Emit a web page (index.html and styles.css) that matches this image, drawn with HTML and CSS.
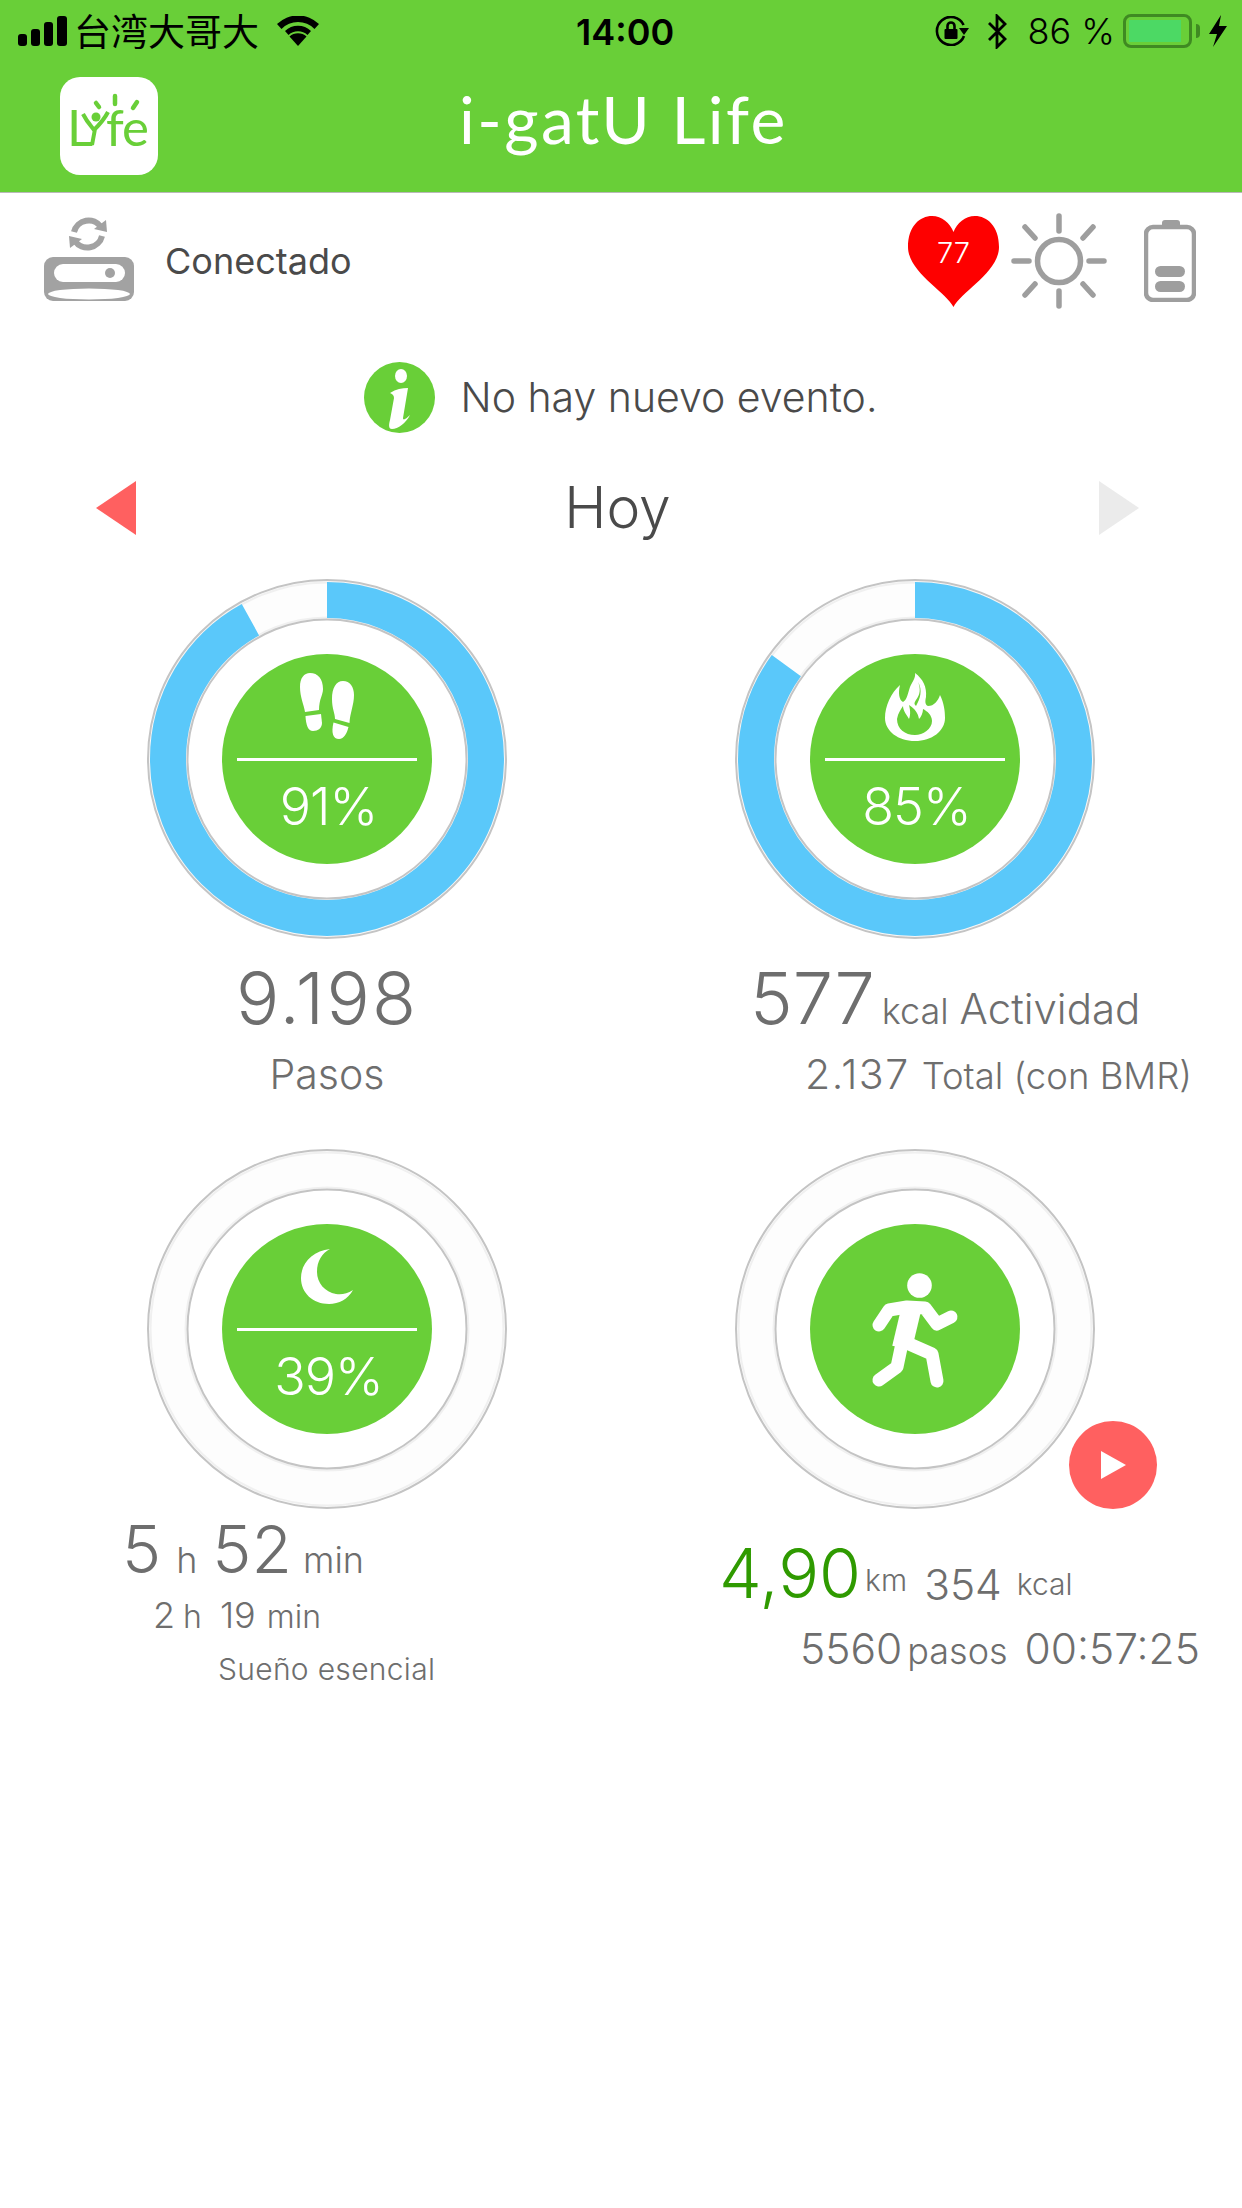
FILE: index.html
```html
<!DOCTYPE html>
<html lang="es">
<head>
<meta charset="utf-8">
<title>i-gotU Life</title>
<link rel="stylesheet" href="styles.css">
</head>
<body>
<header class="header">
  <div class="statusbar">
    <div class="sb-left">
      <svg class="sb-signal" viewBox="0 0 49 30"><rect x="0" y="18" width="9" height="12" rx="3"/><rect x="13" y="13" width="9" height="17" rx="3"/><rect x="26" y="6" width="9" height="24" rx="3"/><rect x="39" y="0" width="10" height="30" rx="3"/></svg>
      <span class="sb-carrier">台湾大哥大</span>
      <svg class="sb-wifi" viewBox="0 0 42 30"><path d="M21 30 L12.5 20.5 A13 13 0 0 1 29.5 20.5 Z"/><path d="M8 15 A19 19 0 0 1 34 15 L30.5 19 A14 14 0 0 0 11.5 19 Z"/><path d="M0 8 A30 30 0 0 1 42 8 L37.5 13 A23 23 0 0 0 4.500 13 Z"/></svg>
    </div>
    <span class="sb-time">14:00</span>
    <div class="sb-right">
      <svg class="sb-lock" viewBox="0 0 34 30"><path class="sb-lock-arc" d="M29 20 A14 14 0 1 1 28.600 9"/><path d="M24 12 H34 L29 19 Z"/><rect x="9.500" y="13" width="13" height="10" rx="1"/><path class="sb-lock-bow" d="M12.500 13 V10 A3.500 3.500 0 0 1 19.500 10 V13"/></svg>
      <svg class="sb-bt" viewBox="0 0 21 35"><path d="M2 9 L18 25 L10 33 V2 L18 10 L2 26"/></svg>
      <span class="sb-pct">86 %</span>
      <div class="sb-batt"><div class="sb-batt-fill"></div></div>
      <div class="sb-batt-nub"></div>
      <svg class="sb-bolt" viewBox="0 0 18 32"><path d="M12 0 L0 19 H8 L4 32 L18 11 H10 Z"/></svg>
    </div>
  </div>
  <div class="navbar">
    <div class="logo">
      <svg viewBox="0 0 98 98">
        <text class="logo-text" x="7" y="69">L</text>
        <text class="logo-text logo-fe" x="46" y="69">fe</text>
        <path class="logo-y" d="M23 37 C27 45 31 49 34 53 C38 49 44 43 48 35 M35 52 L32 68"/>
        <circle class="logo-dot" cx="36" cy="40" r="4.500"/>
        <path class="logo-ray" d="M55 19 V27 M36 26 L39 30 M77 25 L73 31"/>
      </svg>
    </div>
    <h1 class="title">i-gatU Life</h1>
  </div>
</header>

<main>
  <section class="device-row">
    <div class="device-left">
      <svg class="device-icon" viewBox="0 0 90 86">
        <path class="dev-arc" d="M30 16 A15 15 0 0 1 57 11"/>
        <path class="dev-fill" d="M50 13 L63 16 L62 4 Z"/>
        <path class="dev-arc" d="M58 20 A15 15 0 0 1 31 25"/>
        <path class="dev-fill" d="M38 23 L25 20 L26 32 Z"/>
        <rect class="dev-fill" x="0" y="41" width="90" height="44" rx="9"/>
        <rect class="dev-hole" x="10" y="48" width="71" height="18" rx="9"/>
        <circle class="dev-fill" cx="66" cy="57" r="5"/>
        <ellipse class="dev-hole" cx="45" cy="78" rx="41" ry="5.500"/>
      </svg>
      <span class="device-status">Conectado</span>
    </div>
    <div class="device-right">
      <div class="heart">
        <svg class="heart-shape" viewBox="0 0 91 91"><path d="M45.500 91 C38 76 0 56 0 31 C0 10 12 0 24 0 C34 0 42 7 45.500 16 C49 7 57 0 67 0 C79 0 91 10 91 31 C91 56 53 76 45.500 91 Z"/></svg>
        <span class="heart-value">77</span>
      </div>
      <svg class="sun" viewBox="0 0 96 96">
        <circle cx="48" cy="48" r="21.500"/>
        <path d="M48 3 V18 M48 78 V93 M3 48 H18 M78 48 H93 M14 14 L24 25 M82 14 L72 25 M14 82 L24 71 M82 82 L72 71"/>
      </svg>
      <svg class="batt" viewBox="0 0 52 82">
        <rect class="batt-cap" x="18" y="0" width="18" height="8" rx="3"/>
        <rect class="batt-body" x="2" y="7" width="48" height="73" rx="7"/>
        <rect class="batt-cap" x="11" y="46" width="30" height="11" rx="5.500"/>
        <rect class="batt-cap" x="11" y="61" width="30" height="11" rx="5.500"/>
      </svg>
    </div>
  </section>

  <section class="event-row">
    <svg class="info-icon" viewBox="0 0 71 71">
      <circle class="info-bg" cx="35.500" cy="35.500" r="35.500"/>
      <ellipse class="info-fg" cx="37" cy="14" rx="6" ry="7"/>
      <path class="info-fg" d="M26 31 C32 27 38 26 44 26 L39 56 C39 59 42 57 46 53 C42 61 34 67 28 67 C24 67 25 62 26 58 L30 36 C30 33 28 32 26 31 Z"/>
    </svg>
    <span class="event-text">No hay nuevo evento.</span>
  </section>

  <nav class="date-row">
    <svg class="arrow" viewBox="0 0 40 54"><path class="arrow-prev" d="M40 0 V54 L0 27 Z"/></svg>
    <span class="date-label">Hoy</span>
    <svg class="arrow" viewBox="0 0 40 54"><path class="arrow-next" d="M0 0 V54 L40 27 Z"/></svg>
  </nav>

  <section class="grid">
    <article class="cell">
      <div class="ring">
        <svg class="ring-svg" viewBox="0 0 360 360">
          <circle class="ring-band" cx="180" cy="180" r="159"/>
          <circle class="ring-shade" cx="180" cy="180" r="176.500"/>
          <circle class="ring-shade" cx="180" cy="180" r="141.500"/>
          <circle class="ring-value" cx="180" cy="180" r="159" pathLength="100" stroke-dasharray="92 100"/>
          <circle class="ring-line" cx="180" cy="180" r="179"/>
          <circle class="ring-line" cx="180" cy="180" r="139.500"/>
        </svg>
        <div class="badge">
          <div class="badge-top">
            <svg class="icon-feet" viewBox="0 0 54 67">
              <path d="M10 0 C18 0 23 6 23 16 C23 22 19 26 19 37 L5 39 C4 32 0 24 0 14 C0 5 4 0 10 0 Z"/>
              <path d="M5.500 43 L21 41 L22 50 C22 55 18 58 13 58 C8 58 6 52 5.500 43 Z"/>
              <path d="M43 8 C50 8 54 14 54 22 C54 32 50 40 49.500 50 L35 46 C35 40 32 36 32 26 C32 15 36 8 43 8 Z"/>
              <path d="M33.500 49.500 L48.500 54 C47 60 44 66 39 66 C33 66 31 60 33.500 49.500 Z"/>
            </svg>
          </div>
          <div class="badge-line"></div>
          <div class="badge-pct">91%</div>
        </div>
      </div>
      <div class="steps-value">9.198</div>
      <div class="steps-label">Pasos</div>
    </article>

    <article class="cell">
      <div class="ring">
        <svg class="ring-svg" viewBox="0 0 360 360">
          <circle class="ring-band" cx="180" cy="180" r="159"/>
          <circle class="ring-shade" cx="180" cy="180" r="176.500"/>
          <circle class="ring-shade" cx="180" cy="180" r="141.500"/>
          <circle class="ring-value" cx="180" cy="180" r="159" pathLength="100" stroke-dasharray="85 100"/>
          <circle class="ring-line" cx="180" cy="180" r="179"/>
          <circle class="ring-line" cx="180" cy="180" r="139.500"/>
        </svg>
        <div class="badge">
          <div class="badge-top">
            <svg class="icon-fire" viewBox="0 0 60 68">
              <path d="M30 0 C38 6 42 14 41 24 C40 28 40 32 43 33 C49 33 53 28 55 22 C59 30 60 38 60 45 C60 58 47 68 30 68 C13 68 0 58 0 45 C0 33 6 20 15 12 C13 20 14 27 18 29 C22 27 23 20 25 14 C27 9 31 5 30 0 Z"/>
              <path class="fire-cut" d="M12 46 C13 40 16 36 18 33 C18 38 22 42 24 46 C26 41 25 36 24 32 C30 36 33 40 34 46 C36 44 38 40 38 36 C42 38 47 42 47 48 C47 56 38 62 30 62 C20 62 12 56 12 46 Z"/>
              <path class="fire-cut" d="M33 9 C36 16 35 22 31 27 C29 30 29 31 31 33 C35 26 38 17 33 9 Z"/>
            </svg>
          </div>
          <div class="badge-line"></div>
          <div class="badge-pct">85%</div>
        </div>
      </div>
      <div class="kcal-main"><span class="num-xl">577</span><span class="unit-kcal">kcal</span><span class="unit-act">Actividad</span></div>
      <div class="kcal-total"><span class="num-total">2.137</span><span class="unit-total">Total (con BMR)</span></div>
    </article>

    <article class="cell">
      <div class="ring">
        <svg class="ring-svg" viewBox="0 0 360 360">
          <circle class="ring-band" cx="180" cy="180" r="159"/>
          <circle class="ring-shade" cx="180" cy="180" r="176.500"/>
          <circle class="ring-shade" cx="180" cy="180" r="141.500"/>
          <circle class="ring-line" cx="180" cy="180" r="179"/>
          <circle class="ring-line" cx="180" cy="180" r="139.500"/>
        </svg>
        <div class="badge">
          <div class="badge-top">
            <svg class="icon-moon" viewBox="0 0 52 55"><path d="M29 0 C12 2 0 14 0 29 C0 44 12 55 28 55 C38 55 47 50 52 41 C46 45 40 46 35 45 C24 43 16 34 16 23 C16 12 21 4 29 0 Z"/></svg>
          </div>
          <div class="badge-line"></div>
          <div class="badge-pct">39%</div>
        </div>
      </div>
      <div class="sleep-main"><span class="num-lg">5</span><span class="unit-h">h</span><span class="num-lg num-gap">52</span><span class="unit-min">min</span></div>
      <div class="sleep-sub"><span class="num-sm">2</span><span class="unit-h-sm">h</span><span class="num-sm num-gap-sm">19</span><span class="unit-min-sm">min</span></div>
      <div class="sleep-label">Sueño esencial</div>
    </article>

    <article class="cell">
      <div class="ring">
        <svg class="ring-svg" viewBox="0 0 360 360">
          <circle class="ring-band" cx="180" cy="180" r="159"/>
          <circle class="ring-shade" cx="180" cy="180" r="176.500"/>
          <circle class="ring-shade" cx="180" cy="180" r="141.500"/>
          <circle class="ring-line" cx="180" cy="180" r="179"/>
          <circle class="ring-line" cx="180" cy="180" r="139.500"/>
        </svg>
        <div class="badge badge-center">
          <svg class="icon-run" viewBox="145 119 100 140">
            <circle class="run-head" cx="199.500" cy="145.500" r="12.300"/>
            <path d="M159 185 L169 170 L187 167 L205 168 L217 184 L231 177"/>
            <path class="run-torso" d="M191 170 L182 208"/>
            <path d="M181 208 L177 227 L159 240"/>
            <path d="M187 203 L212 214 L217 241"/>
          </svg>
        </div>
        <button class="play"><svg viewBox="0 0 25 28"><path d="M0 0 L25 14 L0 28 Z"/></svg></button>
      </div>
      <div class="run-main"><span class="run-km">4,90</span><span class="run-km-unit">km</span><span class="run-kcal">354</span><span class="run-kcal-unit">kcal</span></div>
      <div class="run-sub"><span class="num-md">5560</span><span class="run-steps-unit">pasos</span><span class="num-md run-time">00:57:25</span></div>
    </article>
  </section>
</main>
</body>
</html>
```
FILE: styles.css
```css
* { box-sizing: border-box; }
html, body { margin: 0; padding: 0; background: #fff; }
body {
  width: 1242px;
  height: 2208px;
  overflow: hidden;
  font-family: Inter, "Liberation Sans", sans-serif;
  color: #6e6e6e;
}

/* header */
.header { height: 193px; background: #69cf38; border-bottom: 1px solid #b9b9b9; }
.statusbar { height: 62px; display: flex; align-items: flex-start; justify-content: space-between; padding: 13px 15px 0 18px; position: relative; color: #000; }
.sb-left, .sb-right { display: flex; align-items: center; height: 36px; }
.sb-signal { width: 49px; height: 30px; fill: #000; }
.sb-carrier { font-family: "Noto Sans CJK TC", sans-serif; font-size: 37px; line-height: 36px; margin-left: 7px; margin-top: -3px; }
.sb-wifi { width: 42px; height: 30px; margin-left: 18px; fill: #000; }
.sb-time { position: absolute; left: 576px; top: 11px; font-size: 36px; line-height: 42px; font-weight: 600; }
.sb-lock { width: 34px; height: 30px; fill: #000; }
.sb-lock-arc, .sb-lock-bow { fill: none; stroke: #000; stroke-width: 2.600; }
.sb-bt { width: 21px; height: 35px; margin-left: 18px; fill: none; stroke: #000; stroke-width: 2.800; }
.sb-pct { font-size: 36px; line-height: 36px; margin-left: 19px; font-weight: 300; }
.sb-batt { width: 69px; height: 34px; margin-left: 8px; border: 3px solid #3f8a22; border-radius: 8px; padding: 3px; }
.sb-batt-fill { width: 52px; height: 22px; background: #4cd964; }
.sb-batt-nub { width: 4px; height: 14px; margin-left: 4px; background: #3f8a22; border-radius: 0 4px 4px 0; }
.sb-bolt { width: 18px; height: 32px; margin-left: 9px; fill: #000; }

.navbar { height: 130px; display: flex; align-items: flex-start; padding: 15px 0 0 60px; position: relative; }
.logo { width: 98px; height: 98px; background: #fff; border-radius: 20px; }
.logo svg { display: block; width: 98px; height: 98px; }
.logo-text { font-family: Lato, sans-serif; font-size: 51px; font-weight: 400; fill: #69cf38; }
.logo-fe { letter-spacing: -1px; font-weight: 400; }
.logo-y { fill: none; stroke: #69cf38; stroke-width: 4; }
.logo-dot { fill: #69cf38; }
.logo-ray { fill: none; stroke: #69cf38; stroke-width: 4.500; stroke-linecap: round; }
.title { position: absolute; left: 459px; top: 17px; margin: 0; font-family: Lato, sans-serif; font-weight: 400; font-size: 66px; line-height: 80px; letter-spacing: 2.400px; color: #fff; white-space: nowrap; }

/* device row */
.device-row { height: 137px; display: flex; justify-content: space-between; align-items: flex-start; padding: 23px 46px 0 44px; }
.device-left { display: flex; align-items: center; }
.device-icon { width: 90px; height: 86px; }
.dev-arc { fill: none; stroke: #a2a2a2; stroke-width: 6; }
.dev-fill { fill: #a2a2a2; }
.dev-hole { fill: #fff; }
.device-status { font-size: 36px; line-height: 44px; margin-left: 31px; margin-top: 3px; color: #4a4a4a; }
.device-right { display: flex; align-items: flex-start; }
.heart { display: grid; width: 91px; height: 91px; place-items: center; }
.heart > * { grid-area: 1 / 1; }
.heart-shape { width: 91px; height: 91px; fill: #fe0000; }
.heart-value { color: #fff; font-size: 29px; font-weight: 300; line-height: 34px; margin-top: -18px; }
.sun { width: 96px; height: 96px; margin-left: 12px; margin-top: -3px; fill: none; stroke: #9e9e9e; stroke-width: 5.500; stroke-linecap: round; }
.batt { width: 52px; height: 82px; margin-left: 37px; margin-top: 4px; }
.batt-cap { fill: #9e9e9e; }
.batt-body { fill: none; stroke: #9e9e9e; stroke-width: 4.500; }

/* info row */
.event-row { height: 134px; display: flex; align-items: center; justify-content: center; padding-right: 1px; }
.info-icon { width: 71px; height: 71px; }
.info-bg { fill: #69cf38; }
.info-fg { fill: #fff; }
.event-text { font-size: 41px; line-height: 48px; margin-left: 26px; color: #4a4a4a; font-weight: 300; }

/* date */
.date-row { height: 88px; display: flex; align-items: center; justify-content: space-between; padding: 0 103px 0 96px; }
.arrow { width: 40px; height: 54px; }
.arrow-prev { fill: #ff6060; }
.arrow-next { fill: #ebebeb; }
.date-label { font-size: 57px; line-height: 70px; color: #4a4a4a; font-weight: 300; }

/* grid */
.grid { display: grid; grid-template-columns: 588px 588px; grid-auto-rows: 570px; padding: 27px 33px 0; }
.cell { min-width: 0; }
.ring { position: relative; width: 360px; height: 360px; margin: 0 auto; display: grid; place-items: center; }
.ring > svg, .ring > .badge { grid-area: 1 / 1; }
.ring-svg { width: 360px; height: 360px; transform: rotate(-90deg); }
.ring-band { fill: none; stroke: #fdfdfd; stroke-width: 38; }
.ring-shade { fill: none; stroke: #f0f0f0; stroke-width: 2; }
.ring-value { fill: none; stroke: #5ac8fa; stroke-width: 36; }
.ring-line { fill: none; stroke: #c4c4c4; stroke-width: 2; }

.badge { width: 210px; height: 210px; border-radius: 50%; background: #69cf38; display: flex; flex-direction: column; align-items: center; }
.badge-center { justify-content: center; }
.badge-top { height: 104px; padding-top: 19px; }
.badge-top svg { display: block; fill: #fff; }
.icon-feet { width: 54px; height: 67px; }
.icon-fire { width: 60px; height: 68px; }
.icon-fire .fire-cut { fill: #69cf38; }
.icon-moon { width: 52px; height: 55px; margin-top: 6px; }
.badge-line { width: 180px; height: 3px; background: #fff; flex: none; }
.badge-pct { color: #fff; font-size: 52px; line-height: 64px; font-weight: 300; margin-top: 14px; padding-left: 3px; letter-spacing: -1px; }
.icon-run { width: 100px; height: 140px; fill: none; stroke: #fff; stroke-width: 13; stroke-linecap: round; stroke-linejoin: round; }
.run-head { fill: #fff; stroke: none; }
.run-torso { stroke-width: 20; stroke-linecap: butt; }
.play { position: absolute; left: 334px; top: 272px; width: 88px; height: 88px; border: 0; padding: 0; border-radius: 50%; background: #ff6060; display: flex; align-items: center; justify-content: center; }
.play svg { width: 25px; height: 28px; fill: #fff; }

/* stats */
.steps-value { text-align: center; font-size: 72px; line-height: 90px; margin-top: 14px; font-weight: 300; letter-spacing: 2.200px; }
.steps-label { text-align: center; font-size: 41px; line-height: 50px; margin-top: 6px; font-weight: 300; }

.kcal-main { display: flex; align-items: baseline; padding-left: 129px; height: 90px; line-height: 90px; margin-top: 14px; }
.num-xl { font-size: 72px; font-weight: 300; }
.unit-kcal { font-size: 36px; margin-left: 7px; font-weight: 300; }
.unit-act { font-size: 42px; margin-left: 11px; font-weight: 300; }
.kcal-total { display: flex; align-items: baseline; padding-left: 184px; line-height: 50px; white-space: nowrap; margin-top: 6px; }
.num-total { font-size: 41px; font-weight: 300; letter-spacing: 1.500px; }
.num-md { font-size: 42.500px; font-weight: 300; }
.unit-total { font-size: 36.500px; margin-left: 12px; font-weight: 300; }

.sleep-main { display: flex; align-items: baseline; padding-left: 89px; line-height: 90px; margin-top: -5px; }
.num-lg { font-size: 66px; font-weight: 300; }
.num-gap { margin-left: 15px; }
.unit-h { font-size: 36px; margin-left: 15px; font-weight: 300; }
.unit-min { font-size: 36px; margin-left: 11px; font-weight: 300; }
.sleep-sub { display: flex; align-items: baseline; padding-left: 120px; line-height: 50px; margin-top: -15px; }
.num-sm { font-size: 36px; font-weight: 300; }
.num-gap-sm { margin-left: 18px; }
.unit-h-sm { font-size: 32px; margin-left: 8px; font-weight: 300; }
.unit-min-sm { font-size: 32px; margin-left: 11px; font-weight: 300; }
.sleep-label { padding-left: 185px; font-size: 30px; line-height: 40px; margin-top: 7px; letter-spacing: 0.300px; font-weight: 300; }

.run-main { padding-left: 98px; line-height: 90px; margin-top: 19px; white-space: nowrap; }
.run-km { font-size: 68px; color: #2f9a00; font-weight: 300; }
.run-km-unit { font-size: 30px; margin-left: 4px; vertical-align: 7px; font-weight: 300; }
.run-kcal { font-size: 42.500px; margin-left: 17px; font-weight: 300; vertical-align: -2px; }
.run-kcal-unit { font-size: 30px; margin-left: 15px; vertical-align: 3px; font-weight: 300; }
.run-sub { display: flex; align-items: baseline; padding-left: 179px; line-height: 50px; margin-top: -13px; white-space: nowrap; }
.run-steps-unit { font-size: 36px; margin-left: 5px; font-weight: 300; }
.run-time { margin-left: 17px; }
```
